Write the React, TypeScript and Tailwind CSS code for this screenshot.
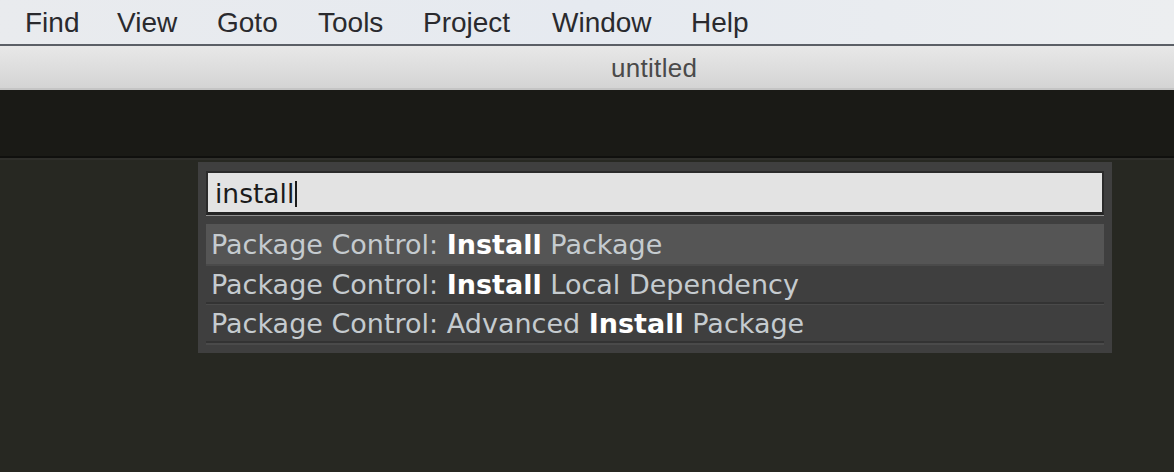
export default function App() {
  const menus: Array<{ label: string; w: string }> = [
    { label: "Find", w: "w-[92px]" },
    { label: "View", w: "w-[100px]" },
    { label: "Goto", w: "w-[101px]" },
    { label: "Tools", w: "w-[105px]" },
    { label: "Project", w: "w-[129px]" },
    { label: "Window", w: "w-[139px]" },
    { label: "Help", w: "w-[80px]" },
  ];

  const rows: Array<{ parts: Array<{ text: string; bold?: boolean }>; selected?: boolean }> = [
    {
      selected: true,
      parts: [{ text: "Package Control: " }, { text: "Install", bold: true }, { text: " Package" }],
    },
    {
      parts: [{ text: "Package Control: " }, { text: "Install", bold: true }, { text: " Local Dependency" }],
    },
    {
      parts: [
        { text: "Package Control: Advanced " },
        { text: "Install", bold: true },
        { text: " Package" },
      ],
    },
  ];

  return (
    <div className="flex h-[472px] w-[1174px] flex-col overflow-hidden bg-[#272822]">
      {/* menu bar */}
      <div className="flex h-[44px] shrink-0 items-center bg-gradient-to-r from-[#e9ebee] via-[#e6eaf0] to-[#eceef0] pl-[25px] pt-[1px] font-['Liberation_Sans',Arial,sans-serif] text-[28px] text-[#2a2a2e]">
        {menus.map((m) => (
          <span key={m.label} className={`${m.w} shrink-0 leading-none`}>
            {m.label}
          </span>
        ))}
      </div>
      <div className="h-[2px] shrink-0 bg-[#5b5f66]" />

      {/* title bar */}
      <div className="flex h-[42px] shrink-0 items-center bg-gradient-to-b from-[#e8e8e8] to-[#d4d4d4] pl-[611px] pt-[3px] font-['Liberation_Sans',Arial,sans-serif] text-[26px] tracking-[0.3px] text-[#4a4a4a]">
        untitled
      </div>
      <div className="h-[2px] shrink-0 bg-[#c4c4c4]" />

      {/* tab strip */}
      <div className="h-[66px] shrink-0 bg-[#1a1a16]" />
      <div className="h-[2px] shrink-0 bg-[#10100e]" />
      <div className="h-[2px] shrink-0 bg-[#2f2f2b]" />

      {/* editor */}
      <div className="relative flex-1 bg-[#272822]">
        <div className="ml-[198px] mt-[2px] w-[914px] bg-[#3f3f3f] px-[8px] pb-[9px] pt-[9px] font-['DejaVu_Sans',sans-serif]">
          <div className="flex h-[44px] items-center border-b-[3px] border-l-[2px] border-r-[2px] border-t-[2px] border-b-[#242424] border-l-[#2b2b2b] border-r-[#2b2b2b] border-t-[#2b2b2b] bg-[#e3e3e3] pl-[7px] pt-[3px] shadow-[0_1px_0_#8f8f8f]">
            <span className="text-[26.5px] leading-none text-[#1b1b1b]">install</span>
            <span className="ml-[1px] h-[26px] w-[2px] bg-[#1b1b1b]" />
          </div>
          <div className="mt-[9px]">
            {rows.map((row, i) => (
              <div
                key={i}
                className={
                  row.selected
                    ? "flex h-[42px] items-center border-b-[2px] border-b-[#4a4a4a] bg-[#555555] pl-[5px] pt-[1px] text-[27px] text-[#c5cbcf]"
                    : "mb-[1px] flex h-[38px] items-center border-b-[2px] border-b-[#333333] bg-[#3f3f3f] pl-[5px] pt-[1px] text-[27px] text-[#c5cbcf] shadow-[0_2px_0_#4a4a4a]"
                }
              >
                <span className="whitespace-pre leading-none">
                  {row.parts.map((p, j) =>
                    p.bold ? (
                      <span key={j} className="font-bold text-white">
                        {p.text}
                      </span>
                    ) : (
                      <span key={j}>{p.text}</span>
                    ),
                  )}
                </span>
              </div>
            ))}
          </div>
        </div>
      </div>
    </div>
  );
}
